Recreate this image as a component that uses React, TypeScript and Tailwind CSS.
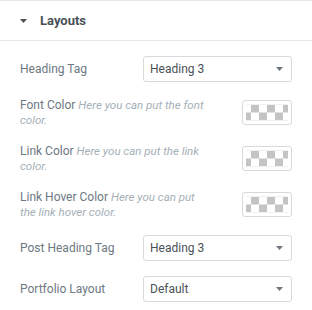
import React from "react";

function Caret({ className }: { className?: string }) {
  return (
    <svg width="7" height="4" viewBox="0 0 7 4" className={className}>
      <path d="M0 0 L7 0 L3.5 4 Z" fill="currentColor" />
    </svg>
  );
}

function Select({ value }: { value: string }) {
  return (
    <div className="w-[149px] h-[26px] border border-[#d5dadf] rounded-[3px] bg-white flex items-center justify-between pl-[6px] pr-[8px]">
      <span className="text-[12px] text-[#495157]">{value}</span>
      <Caret className="text-[#6d7882]" />
    </div>
  );
}

function Swatch() {
  return (
    <div className="w-[50px] h-[25px] border border-[#d5dadf] rounded-[3px] bg-white px-[3px] py-[3px] flex">
      <svg className="w-full h-full" viewBox="0 0 42 17" preserveAspectRatio="none">
        <defs>
          <pattern id="chk" x="5" y="0.5" width="16" height="16" patternUnits="userSpaceOnUse">
            <rect x="0" y="0" width="8" height="8" fill="#c4c4c4" />
            <rect x="8" y="8" width="8" height="8" fill="#c4c4c4" />
          </pattern>
        </defs>
        <rect x="0" y="0.5" width="42" height="16" fill="url(#chk)" />
      </svg>
    </div>
  );
}

function SelectRow({ label, value }: { label: string; value: string }) {
  return (
    <div className="flex items-center justify-between">
      <span className="text-[12px] text-[#6d7882]">{label}</span>
      <Select value={value} />
    </div>
  );
}

function ColorRow({ label, desc }: { label: string; desc: string }) {
  return (
    <div className="flex items-center justify-between h-[31px]">
      <p className="w-[190px] text-[12px] leading-[15px]">
        <span className="text-[12px] leading-[15px] text-[#6d7882]">{label}</span>{" "}
        <span className="text-[11.5px] leading-[15px] italic text-[#a4afb7]">{desc}</span>
      </p>
      <Swatch />
    </div>
  );
}

export default function App() {
  return (
    <div
      className="w-[312px] h-[310px] bg-white overflow-hidden"
      style={{ fontFamily: "Roboto, 'Liberation Sans', sans-serif" }}
    >
      <div className="h-[41px] border-t border-b border-[#e6e9ec] flex items-center pl-[20px] gap-[13px]">
        <Caret className="text-[#495157]" />
        <span className="text-[13px] font-bold text-[#495157]">Layouts</span>
      </div>
      <div className="px-[20px] pt-[15px] flex flex-col gap-[15px]">
        <SelectRow label="Heading Tag" value="Heading 3" />
        <ColorRow label="Font Color" desc="Here you can put the font color." />
        <ColorRow label="Link Color" desc="Here you can put the link color." />
        <ColorRow label="Link Hover Color" desc="Here you can put the link hover color." />
        <SelectRow label="Post Heading Tag" value="Heading 3" />
        <SelectRow label="Portfolio Layout" value="Default" />
      </div>
    </div>
  );
}
